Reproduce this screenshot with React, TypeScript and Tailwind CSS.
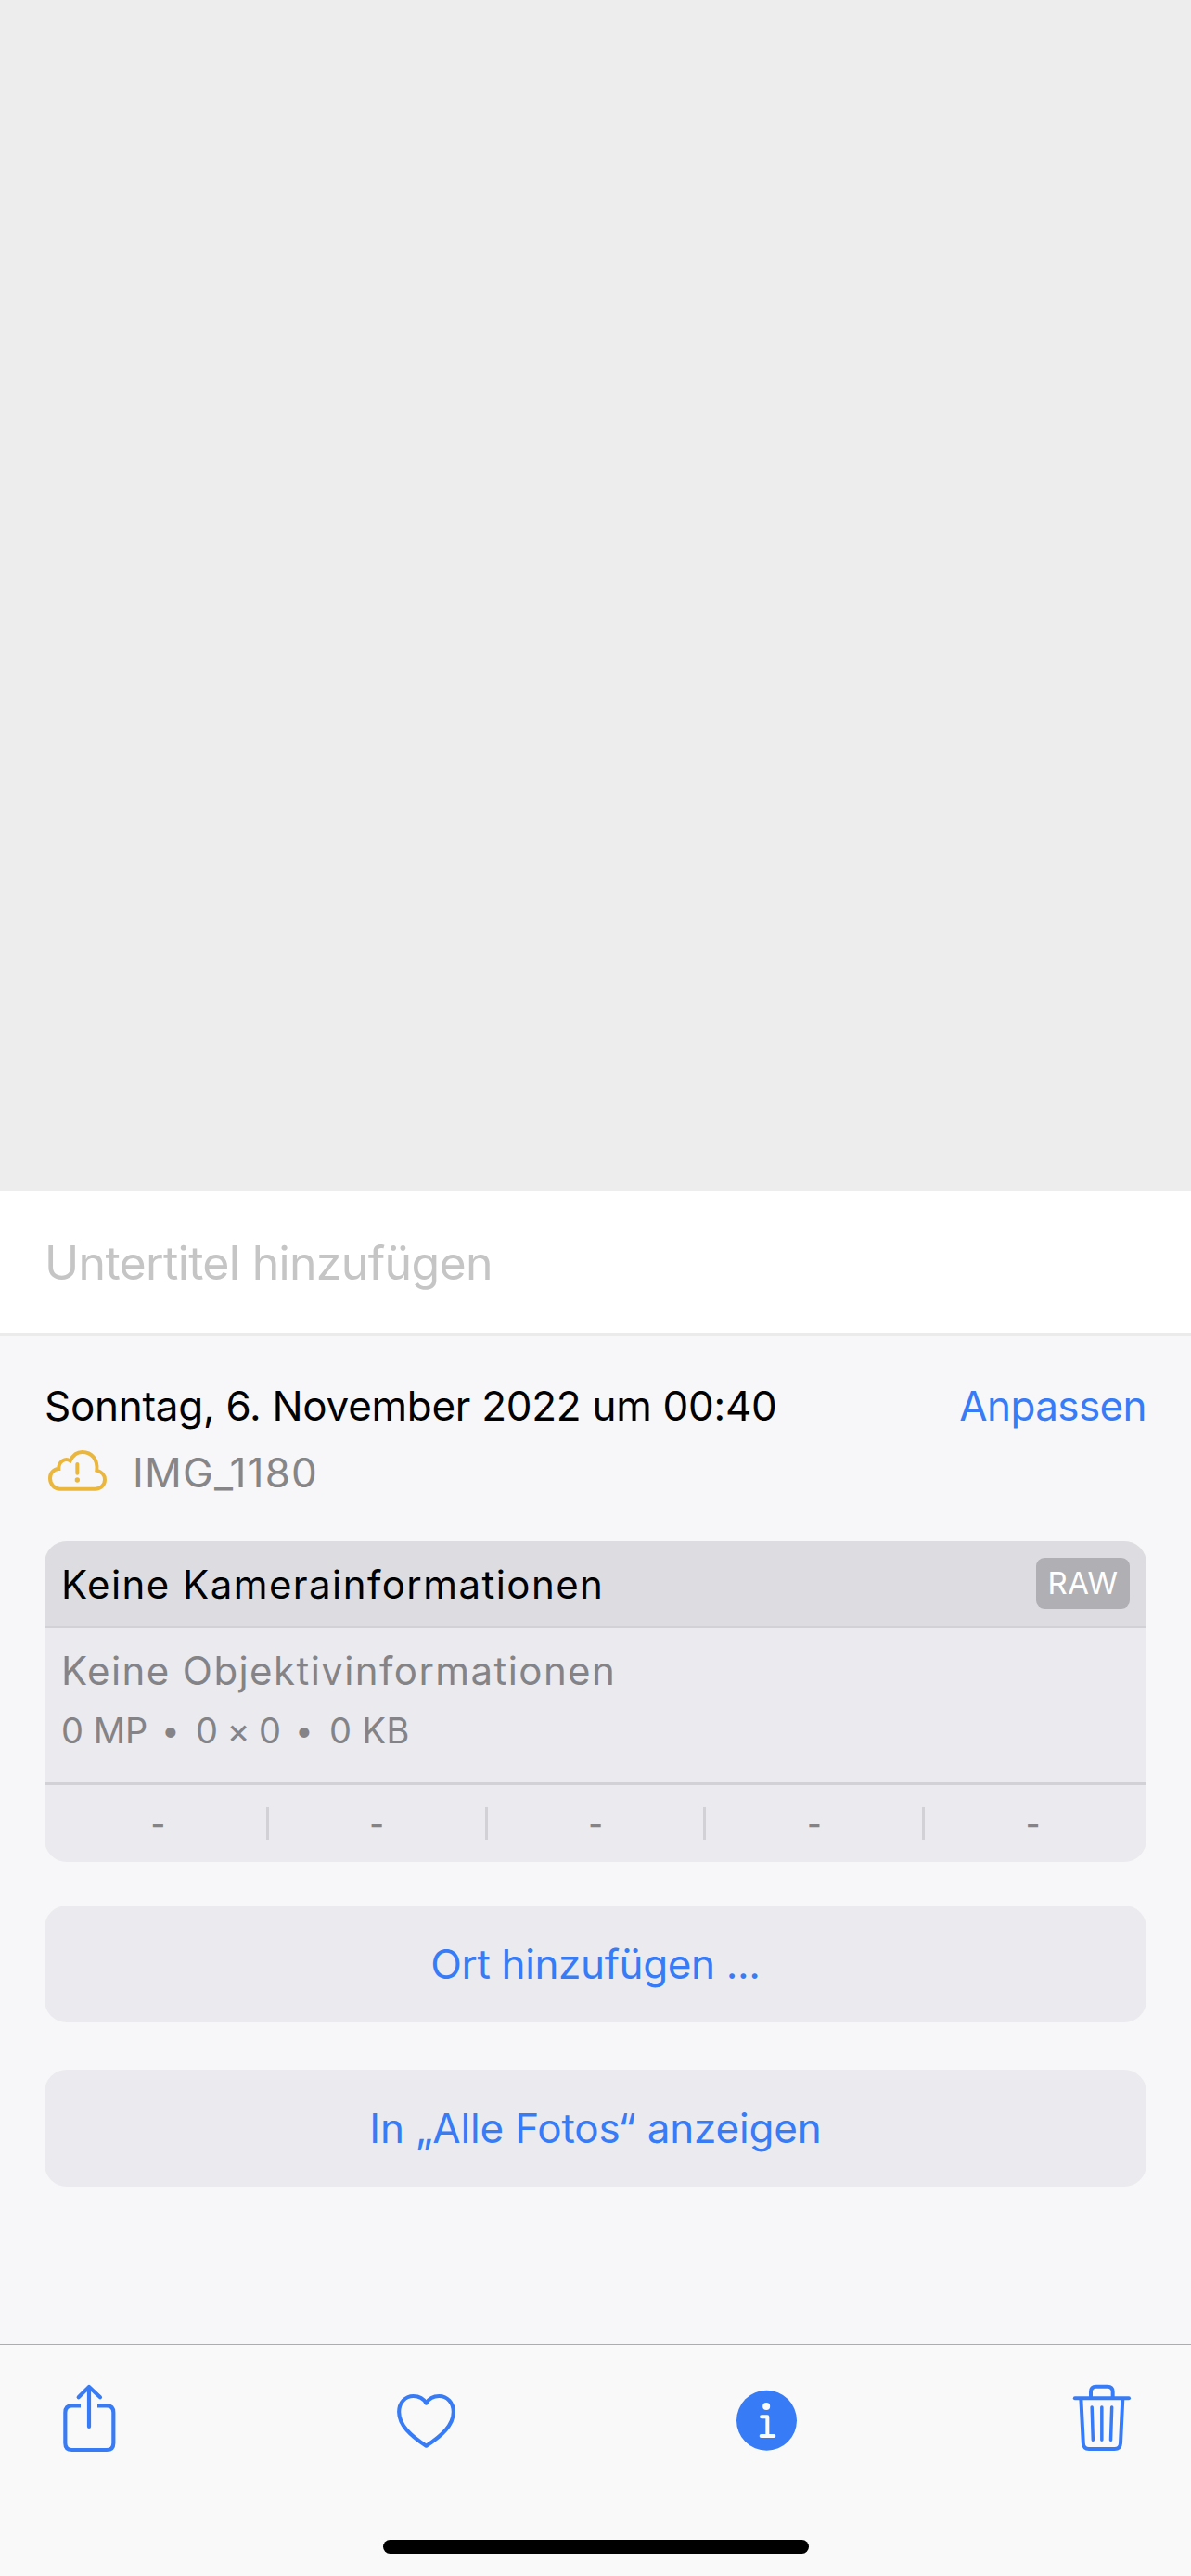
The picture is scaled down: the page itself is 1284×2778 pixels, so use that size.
import type { ReactNode } from "react";

function CloudAlertIcon() {
  return (
    <svg
      width="67"
      height="48"
      viewBox="30 37 201 144"
      fill="none"
      stroke="#ebb63c"
      strokeWidth="12"
      strokeLinecap="round"
      aria-hidden="true"
    >
      <path
        d="M74 168H188C206 168 219 155 219 138C219 123 208 112 193 108C197 74 177 49 146 49C128 49 115 61 107 77C91 67 69 79 70 103C53 104 42 117 42 134C42 154 57 168 74 168Z"
        strokeLinejoin="miter"
      />
      <path d="M130 88V117" />
      <circle cx="130" cy="139" r="8" fill="#ebb63c" stroke="none" />
    </svg>
  );
}

function ShareIcon() {
  return (
    <svg
      width="60"
      height="80"
      viewBox="81 204 180 240"
      fill="none"
      stroke="#377cf6"
      strokeWidth="12.5"
      aria-hidden="true"
    >
      <path d="M141 283H113Q91 283 91 305V404Q91 426 113 426H225Q247 426 247 404V305Q247 283 225 283H195" />
      <path
        d="M168 222V351M134 256L168 222L204 256"
        strokeLinecap="round"
        strokeLinejoin="round"
      />
    </svg>
  );
}

function HeartIcon() {
  return (
    <svg
      width="68"
      height="80"
      viewBox="78 54 204 240"
      fill="none"
      stroke="#377cf6"
      strokeWidth="12.5"
      strokeLinejoin="round"
      aria-hidden="true"
    >
      <path d="M178.500 125C170 110 154 102 137 102C110 102 90.500 124 90.500 153C90.500 196 128 230 178.500 263C229 230 266.500 196 266.500 153C266.500 124 247 102 220 102C203 102 187 110 178.500 125Z" />
    </svg>
  );
}

function InfoIcon() {
  return (
    <svg
      width="66"
      height="80"
      viewBox="72 54 198 240"
      fill="none"
      aria-hidden="true"
    >
      <circle cx="169.5" cy="181" r="97.5" fill="#377cf6" />
      <circle cx="168.500" cy="135" r="12" fill="#fafafa" />
      <path
        d="M153 169H172V231M152 231H193"
        stroke="#fafafa"
        strokeWidth="12"
        strokeLinecap="round"
        strokeLinejoin="round"
      />
    </svg>
  );
}

function TrashIcon() {
  return (
    <svg
      width="64"
      height="80"
      viewBox="78 174 192 240"
      fill="none"
      stroke="#377cf6"
      strokeWidth="12"
      aria-hidden="true"
    >
      <path d="M86.500 228.500H261" strokeLinecap="round" />
      <path d="M138 228V208Q138 191 155 191H192Q209 191 209 208V228" />
      <path d="M106 230L113.500 375Q114.500 393 132 393H215Q233 393 234 375L241 230" />
      <path
        d="M141.500 258L145 364M173.500 258V364M206 258L202.500 364"
        strokeWidth="10.500"
        strokeLinecap="round"
      />
    </svg>
  );
}

function WideButton({ children }: { children: ReactNode }) {
  return (
    <button className="flex h-[126px] w-full items-center justify-center rounded-3xl bg-[#ebebef] text-[44px] text-[#377cf6]">
      {children}
    </button>
  );
}

const exposure = ["-", "-", "-", "-", "-"];

export default function App() {
  return (
    <div className="flex h-[2778px] w-[1284px] flex-col overflow-hidden bg-[#f7f7f9] font-['Inter',sans-serif] text-black">
      <div className="h-[1284px] shrink-0 bg-[#ededed]" />

      <div className="flex h-[157px] shrink-0 items-center border-b-3 border-[#ebebeb] bg-white pt-[2px] pl-12">
        <span className="text-[50px] leading-[60px] tracking-[-0.67px] text-[#c5c5c6]">
          Untertitel hinzufügen
        </span>
      </div>

      <main className="flex grow flex-col px-12 pt-[45px]">
        <div className="flex justify-between text-[44px] leading-[60px]">
          <span className="tracking-[-0.28px]">
            Sonntag, 6. November 2022 um 00:40
          </span>
          <span className="tracking-[-0.6px] text-[#377cf6]">Anpassen</span>
        </div>
        <div className="mt-3 flex h-[60px] pl-[2px]">
          <div className="pt-[4px]">
            <CloudAlertIcon />
          </div>
          <span className="ml-[26px] text-[44px] leading-[60px] tracking-[1.2px] text-[#868689]">
            IMG_1180
          </span>
        </div>

        <section className="mt-[44px] overflow-hidden rounded-3xl bg-[#ebebef] text-[#848488]">
          <header className="flex h-[94px] items-center justify-between border-b-3 border-[#d1d1d6] bg-[#dddde1] px-[18px]">
            <span className="pt-[2px] text-[42px] leading-[60px] tracking-[1.44px] text-black">
              Keine Kamerainformationen
            </span>
            <span className="flex h-[55px] w-[101px] items-center justify-center rounded-[9px] bg-[#afafb4] pt-px text-[33px] tracking-[0.4px] text-white">
              RAW
            </span>
          </header>
          <div className="h-[169px] border-b-3 border-[#d1d1d6] pt-4 pl-[18px]">
            <p className="text-[42px] leading-[60px] tracking-[1.42px]">
              Keine Objektivinformationen
            </p>
            <p className="mt-1 flex text-[38px] leading-[60px]">
              <span className="w-[108px]">0 MP</span>
              <span className="w-[37px] text-[35px]">•</span>
              <span className="w-[107px] tracking-[-0.6px]">0 × 0</span>
              <span className="w-[37px] text-[35px]">•</span>
              <span className="tracking-[0.4px]">0 KB</span>
            </p>
          </div>
          <div className="flex h-[83px] items-center pr-[3px] pl-[6px]">
            {exposure.map((value, i) => (
              <div
                key={i}
                className="flex h-[35px] flex-1 items-center justify-center border-r-3 border-[#d1d1d6] last:border-transparent"
              >
                <span className="text-[34px] leading-[35px] font-medium">
                  {value}
                </span>
              </div>
            ))}
          </div>
        </section>

        <div className="mt-[47px] flex flex-col gap-[51px]">
          <WideButton>
            <span className="tracking-[-0.37px]">Ort hinzufügen ...</span>
          </WideButton>
          <WideButton>
            <span className="tracking-[-0.17px]">In „Alle Fotos“ anzeigen</span>
          </WideButton>
        </div>
      </main>

      <footer className="flex h-[250px] shrink-0 flex-col items-center border-t border-[#adadaf] bg-[#f9f9f9]">
        <nav className="flex w-full pt-[39px] pl-[67px]">
          <ShareIcon />
          <div className="ml-[299px]">
            <HeartIcon />
          </div>
          <div className="ml-[300px]">
            <InfoIcon />
          </div>
          <div className="ml-[296px]">
            <TrashIcon />
          </div>
        </nav>
        <div className="mt-[91px] h-[15px] w-[459px] rounded-full bg-black" />
      </footer>
    </div>
  );
}
